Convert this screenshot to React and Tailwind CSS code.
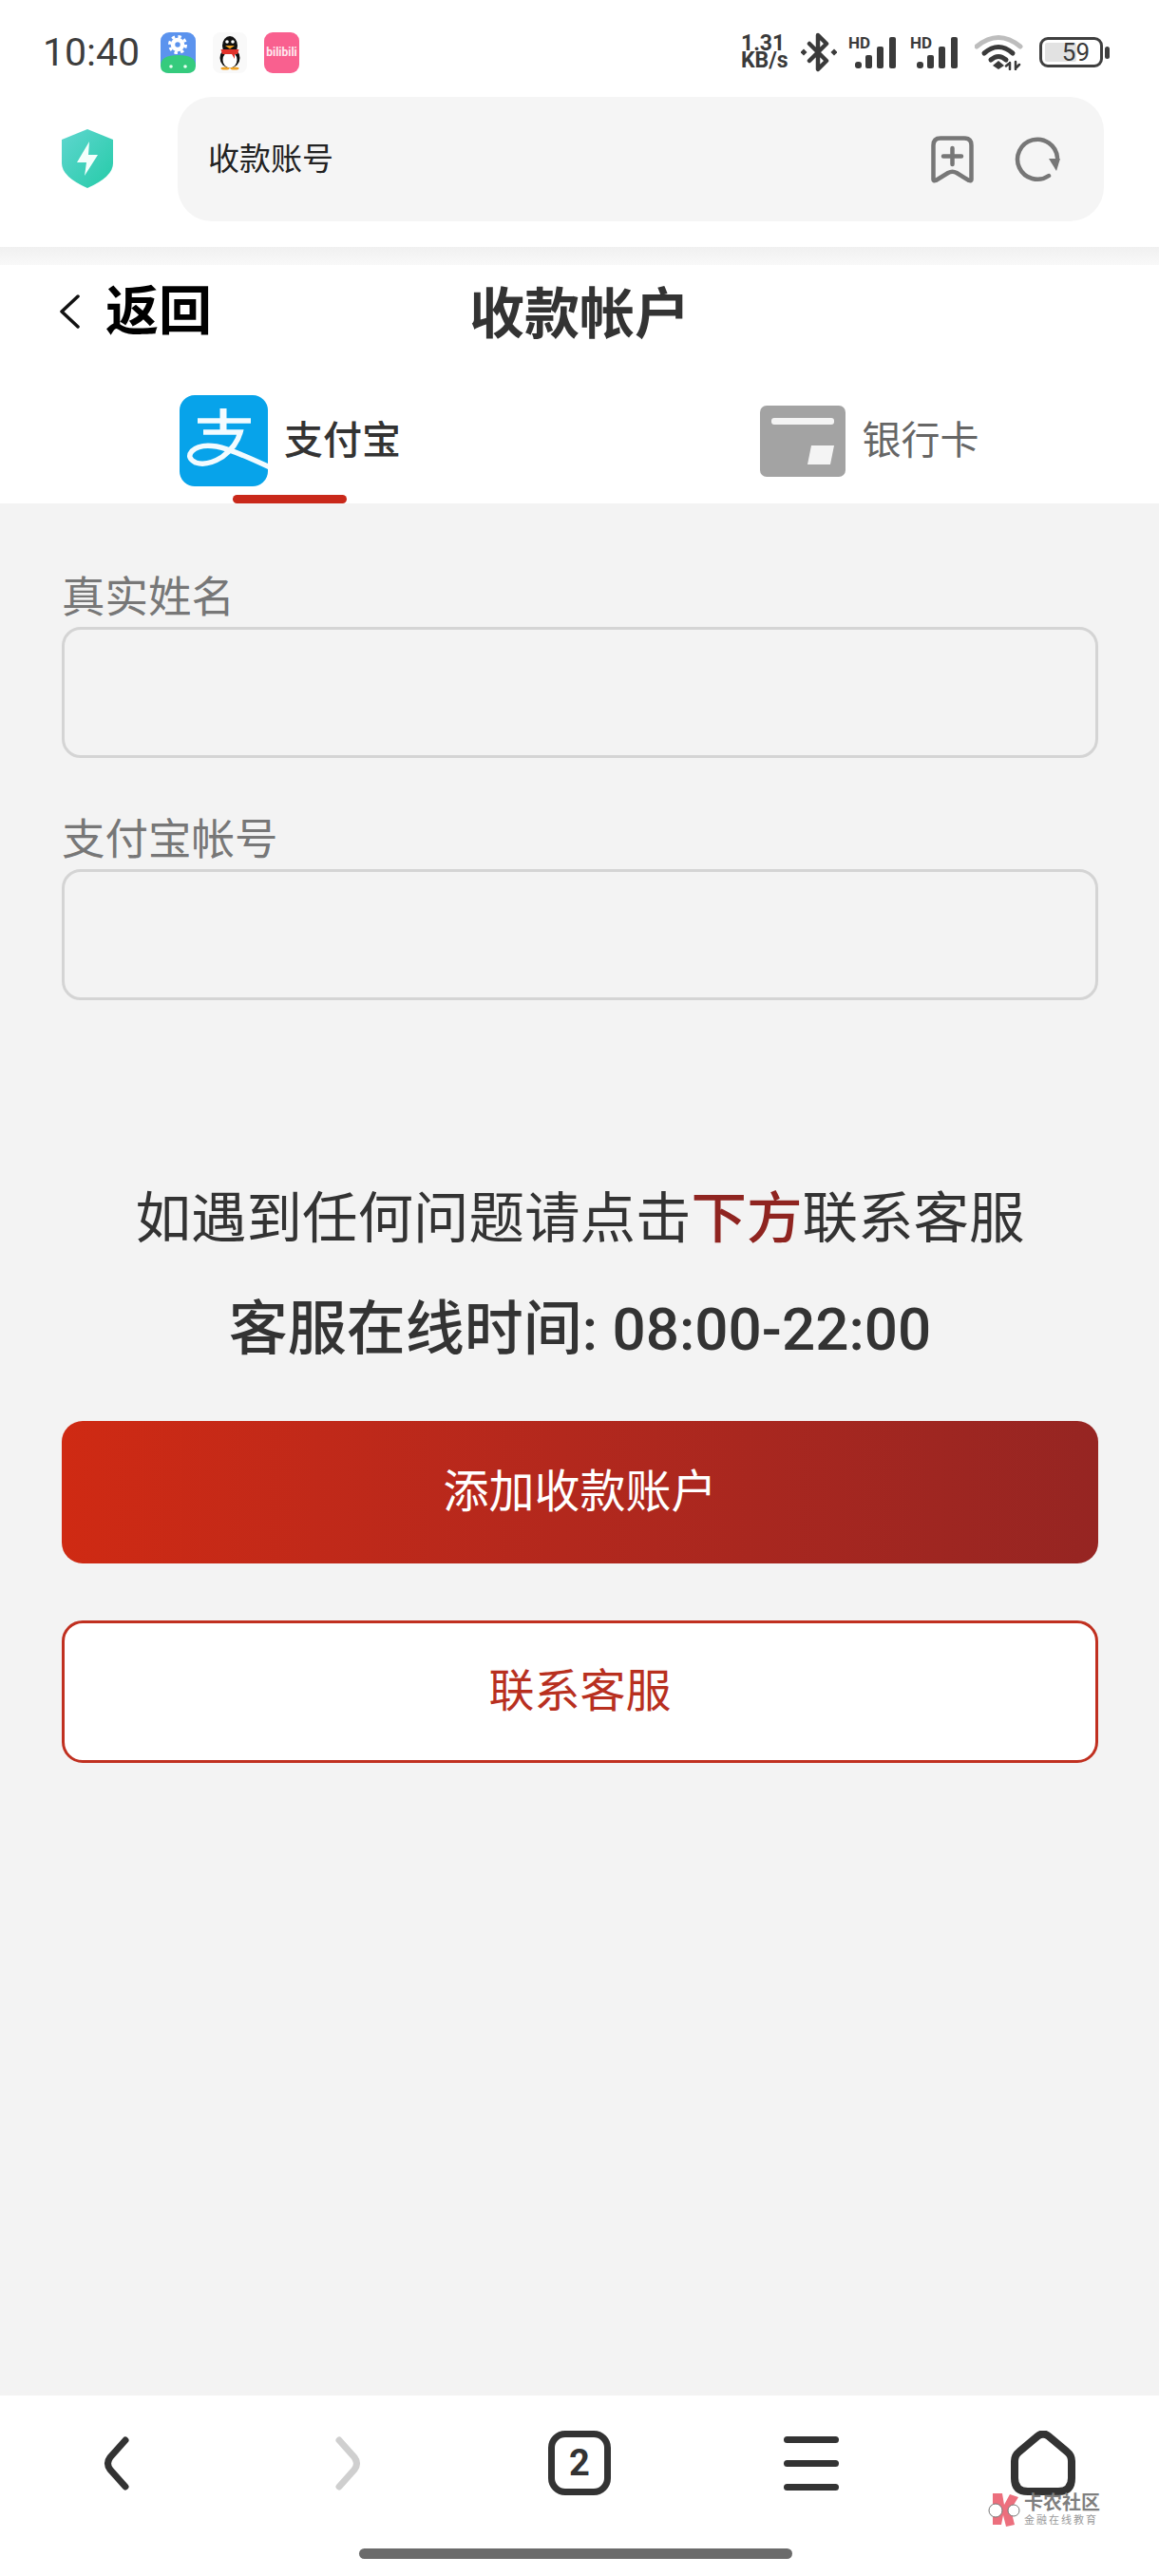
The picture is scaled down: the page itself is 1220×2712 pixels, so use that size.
import React from 'react';

function Shield() {
  return (
    <svg width="54" height="62" viewBox="0 0 54 62">
      <defs>
        <linearGradient id="shieldFill" x1="0" y1="0" x2="1" y2="1">
          <stop offset="0" stopColor="#5fd6cf" />
          <stop offset="1" stopColor="#25cba8" />
        </linearGradient>
      </defs>
      <path d="M27 0 L54 11 V36 Q54 50 27 62 Q0 50 0 36 V11 Z" fill="url(#shieldFill)" />
      <path d="M29 13 L16 35 H26 L24 49 L38 27 H28 Z" fill="#f4fffc" />
    </svg>
  );
}

function SettingsApp() {
  return (
    <svg width="37" height="43" viewBox="0 0 37 43">
      <rect width="37" height="43" rx="9" fill="#5b93ee" />
      <path d="M0 35 Q0 24 18.500 24 Q37 24 37 35 Q37 43 28 43 H9 Q0 43 0 35 Z" fill="#35cb7d" />
      <circle cx="18" cy="13" r="5" fill="none" stroke="#fff" strokeWidth="4.500" />
      <circle cx="18" cy="13" r="8.500" fill="none" stroke="#fff" strokeWidth="3" strokeDasharray="3.400 3.300" />
      <circle cx="11" cy="36" r="1.800" fill="#e9fff2" />
      <circle cx="26" cy="36" r="1.800" fill="#e9fff2" />
    </svg>
  );
}

function QQApp() {
  return (
    <svg width="36" height="43" viewBox="0 0 36 43">
      <rect width="36" height="43" rx="8" fill="#f9f9f9" />
      <ellipse cx="18" cy="14" rx="8" ry="10" fill="#111" />
      <ellipse cx="18" cy="27" rx="10.500" ry="10.500" fill="#111" />
      <ellipse cx="18" cy="29" rx="7.500" ry="8.500" fill="#fff" />
      <circle cx="15" cy="10" r="1.800" fill="#fff" />
      <circle cx="21" cy="10" r="1.800" fill="#fff" />
      <path d="M13 14 H23 L18 17.500 Z" fill="#f0a224" />
      <path d="M8.500 18 H27.500 L26 23 H23 V28 L20 23 H10 Z" fill="#e3322b" />
      <ellipse cx="13" cy="38" rx="4.500" ry="1.500" fill="#f0a224" />
      <ellipse cx="23" cy="38" rx="4.500" ry="1.500" fill="#f0a224" />
    </svg>
  );
}

function Bluetooth() {
  return (
    <svg width="38" height="42" viewBox="0 0 38 42" fill="none" stroke="#3a3a3a" strokeWidth="4.500" strokeLinejoin="round" strokeLinecap="round">
      <path d="M9 12 L27 30 L18 39 V3 L27 12 L9 30" />
      <rect x="0.500" y="18.500" width="5" height="5" fill="#3a3a3a" strokeWidth="0" transform="rotate(45 3 21)" />
      <rect x="32.500" y="18.500" width="5" height="5" fill="#3a3a3a" strokeWidth="0" transform="rotate(45 35 21)" />
    </svg>
  );
}

function Signal() {
  return (
    <svg width="55" height="40" viewBox="0 -2 55 40">
      <text x="0" y="14" fontSize="17" fontWeight="700" fontFamily="Roboto, sans-serif" fill="#3a3a3a">HD</text>
      <rect x="7" y="28" width="7" height="7" rx="3" fill="#3a3a3a" />
      <rect x="18" y="21" width="7" height="14" rx="2" fill="#3a3a3a" />
      <rect x="30" y="12" width="7" height="23" rx="2" fill="#3a3a3a" />
      <rect x="43" y="2" width="7" height="33" rx="2" fill="#3a3a3a" />
    </svg>
  );
}

function Wifi() {
  return (
    <svg width="51" height="38" viewBox="0 0 51 38" fill="none" strokeLinecap="round">
      <path d="M2 13 Q25 -6 48 13" stroke="#bdbdbd" strokeWidth="5" />
      <path d="M10 20 Q25 7 40 20" stroke="#3a3a3a" strokeWidth="5" />
      <path d="M17 27 Q25 20 33 27" stroke="#3a3a3a" strokeWidth="5" />
      <path d="M25 28 L31 33 L25 37 L19 33 Z" fill="#3a3a3a" />
      <path d="M37 37 V30 M36 31 L33 33.500 M43 37 V29 M44 35 L47 32" stroke="#3a3a3a" strokeWidth="2.500" />
    </svg>
  );
}

function BookmarkPlus() {
  return (
    <svg width="45" height="50" viewBox="0 0 45 50" fill="none" stroke="#777" strokeWidth="4.500" strokeLinecap="round" strokeLinejoin="round">
      <path d="M10 2.500 H35 Q42.500 2.500 42.500 10 V46 Q42.500 48 40 47 L27 39 Q22.500 36.500 18 39 L5 47 Q2.500 48 2.500 46 V10 Q2.500 2.500 10 2.500 Z" />
      <path d="M22.500 13 V30 M13 21.500 H32" />
    </svg>
  );
}

function Reload() {
  return (
    <svg width="48" height="48" viewBox="0 0 48 48" fill="none">
      <path d="M36 41 A21 21 0 1 1 45 22" stroke="#777" strokeWidth="4.500" strokeLinecap="round" />
      <path d="M36 23 H48 L44 36 Z" fill="#777" />
    </svg>
  );
}

function AlipayLogo() {
  return (
    <svg width="95" height="96" viewBox="9 6 93 96" className="block">
      <defs>
        <clipPath id="alipayClip">
          <rect x="9" y="6" width="93" height="96" rx="16" />
        </clipPath>
      </defs>
      <g clipPath="url(#alipayClip)">
        <rect x="9" y="6" width="93" height="96" fill="#07a3ea" />
        <g fill="none" stroke="#f2fbff" strokeWidth="5.500">
          <path d="M28 33 H84" />
          <path d="M55 20 V44" strokeWidth="7" />
          <path d="M34 45 H73 Q69 60 54 71 Q38 81 26 77 Q16 72 22 65 Q30 57 48 60 Q64 63 104 82" />
        </g>
      </g>
    </svg>
  );
}

function BankLogo() {
  return (
    <svg width="90" height="75" viewBox="0 0 90 75">
      <rect width="90" height="75" rx="7" fill="#a3a3a3" />
      <rect x="12" y="13" width="66" height="7" rx="3" fill="#f4f4f4" />
      <path d="M54 42 H78 L74 62 H50 Z" fill="#f4f4f4" />
    </svg>
  );
}

function Watermark() {
  return (
    <div className="absolute left-[1040px] top-[2624px] flex items-start gap-[2px]">
      <svg width="36" height="36" viewBox="0 0 36 36">
        <path d="M5 1 H15 L17 13 L23 2 L32 5 L24 18 L28 34 L19 36 L16 24 L14 34 H5 Z" fill="#ec6f7d" />
        <circle cx="8" cy="19" r="7" fill="#fff" stroke="#777" strokeWidth="1" />
        <circle cx="27" cy="19" r="6" fill="#fff" stroke="#777" strokeWidth="1" />
      </svg>
      <div className="flex flex-col text-[#7f7f7f]">
        <span className="text-[20px] leading-[23px] font-bold whitespace-nowrap">卡农社区</span>
        <span className="text-[11px] leading-[13px] tracking-[2px] text-[#9a9a9a] whitespace-nowrap">金融在线教育</span>
      </div>
    </div>
  );
}

export default function App() {
  return (
    <div className="relative flex h-[2712px] w-[1220px] flex-col overflow-hidden bg-[#f3f3f3] font-['Roboto','Noto_Sans_CJK_SC',sans-serif]">
      {/* Status bar */}
      <div className="h-[102px] bg-white pt-[33px] pl-[45px] pr-[52px]">
        <div className="flex h-[44px] items-center justify-between">
          <div className="flex items-center">
            <span className="w-[124px] text-[41px] leading-[44px] text-[#3d3d3d]">10:40</span>
            <div className="flex items-center gap-[18px]">
              <SettingsApp />
              <QQApp />
              <div className="flex h-[43px] w-[37px] items-center justify-center rounded-[9px] bg-[#f9608f] text-[12px] font-bold text-[#ffe9f0]">
                bilibili
              </div>
            </div>
          </div>
          <div className="flex items-center">
            <span className="w-[53px] text-[23px] leading-[18px] font-bold text-[#3a3a3a]">
              1.31
              <br />
              KB/s
            </span>
            <div className="ml-[10px]"><Bluetooth /></div>
            <div className="ml-[12px]"><Signal /></div>
            <div className="ml-[10px]"><Signal /></div>
            <div className="ml-[13px]"><Wifi /></div>
            <div className="ml-[17px] flex items-center gap-[2px]">
              <div className="flex h-[32px] w-[67px] items-center rounded-[9px] border-[3px] border-[#3f3f3f] p-[3px]">
                <div className="flex h-full w-[60%] items-center justify-end rounded-[2px] bg-[#e2e2e2] text-[26px] leading-none text-[#3a3a3a]">
                  <span className="translate-x-[14px]">59</span>
                </div>
              </div>
              <div className="h-[13px] w-[5px] rounded-[3px] bg-[#3f3f3f]" />
            </div>
          </div>
        </div>
      </div>

      {/* Browser address bar */}
      <div className="flex h-[158px] items-start bg-white pl-[65px]">
        <div className="mt-[34px]"><Shield /></div>
        <div className="ml-[68px] flex h-[131px] w-[975px] items-center justify-between rounded-[36px] bg-[#f5f5f5] pl-[32px] pr-[46px]">
          <span className="text-[33px] leading-[44px] text-[#222]">收款账号</span>
          <div className="flex items-center gap-[43px]">
            <BookmarkPlus />
            <Reload />
          </div>
        </div>
      </div>
      <div className="h-[19px] bg-gradient-to-b from-[#f0f0f0] to-[#f9f9f9]" />

      {/* Page header */}
      <div className="grid h-[98px] grid-cols-[1fr_auto_1fr] items-center bg-white px-[62px]">
        <div className="flex items-center">
          <svg width="22" height="36" viewBox="0 0 22 36" fill="none" stroke="#111" strokeWidth="3.500" strokeLinecap="round" strokeLinejoin="round">
            <path d="M20 2 L3 18 L20 34" />
          </svg>
          <span className="ml-[27px] text-[56px] leading-[70px] font-bold text-black">返回</span>
        </div>
        <span className="mt-[6px] text-[58px] leading-[70px] font-bold text-[#333]">收款帐户</span>
        <div />
      </div>

      {/* Tabs */}
      <div className="grid h-[153px] grid-cols-2 bg-white">
        <div className="flex flex-col items-center pt-[39px]">
          <div className="flex h-[96px] items-center gap-[16px]">
            <AlipayLogo />
            <span className="text-[41px] leading-[50px] font-medium text-[#333]">支付宝</span>
          </div>
          <div className="mt-[9px] h-[9px] w-[120px] rounded-[5px] bg-[#c9281a]" />
        </div>
        <div className="flex flex-col items-center pt-[39px]">
          <div className="flex h-[96px] items-center gap-[18px]">
            <BankLogo />
            <span className="text-[41px] leading-[50px] text-[#666]">银行卡</span>
          </div>
        </div>
      </div>

      {/* Form */}
      <div className="flex flex-1 flex-col pl-[65px] pr-[64px] pt-[70px]">
        <label className="text-[45.500px] leading-[60px] text-[#777]">真实姓名</label>
        <div className="h-[138px] rounded-[20px] border-[3px] border-[#d4d4d4]" />
        <label className="mt-[57px] text-[45.500px] leading-[60px] text-[#777]">支付宝帐号</label>
        <div className="h-[138px] rounded-[20px] border-[3px] border-[#d4d4d4]" />

        <p className="mt-[190px] text-center text-[58.500px] leading-[80px] text-[#333]">
          如遇到任何问题请点击<span className="font-medium text-[#8f2420]">下方</span>联系客服
        </p>
        <p className="mt-[37px] text-center text-[62px] leading-[80px] font-medium text-[#333]">客服在线时间: 08:00-22:00</p>

        <button className="mt-[56px] h-[150px] rounded-[22px] bg-gradient-to-r from-[#cf2a13] to-[#962522] text-[48px] text-white">
          添加收款账户
        </button>
        <button className="mt-[60px] h-[150px] rounded-[22px] border-[3px] border-[#c03020] bg-white text-[48px] text-[#b8301f]">
          联系客服
        </button>
      </div>

      {/* Browser bottom nav */}
      <div className="h-[190px] bg-white pt-[37px]">
        <div className="grid h-[68px] grid-cols-5 items-center justify-items-center">
          <svg width="27" height="57" viewBox="0 0 27 57" fill="none" stroke="#333" strokeWidth="7" strokeLinecap="round">
            <path d="M23 4 L7 22 Q2 28.500 7 35 L23 53" />
          </svg>
          <svg width="27" height="57" viewBox="0 0 27 57" fill="none" stroke="#cfcfcf" strokeWidth="7" strokeLinecap="round">
            <path d="M4 4 L20 22 Q25 28.500 20 35 L4 53" />
          </svg>
          <div className="flex h-[68px] w-[66px] items-center justify-center rounded-[18px] border-[7px] border-[#333] text-[38px] leading-none font-bold text-[#333]">
            2
          </div>
          <div className="flex h-[57px] w-[58px] flex-col justify-between">
            <div className="h-[7px] rounded-full bg-[#333]" />
            <div className="h-[7px] rounded-full bg-[#333]" />
            <div className="h-[7px] rounded-full bg-[#333]" />
          </div>
          <svg width="68" height="68" viewBox="0 0 68 68" fill="none" stroke="#333" strokeWidth="8" strokeLinejoin="round">
            <path d="M28 6 Q34 1 40 6 L59 22 Q64 26 64 32 V50 Q64 64 50 64 H18 Q4 64 4 50 V32 Q4 26 9 22 Z" />
          </svg>
        </div>
        <div className="ml-[378px] mt-[56px] h-[11px] w-[456px] rounded-full bg-[#6b6b6b]" />
      </div>

      <Watermark />
    </div>
  );
}
